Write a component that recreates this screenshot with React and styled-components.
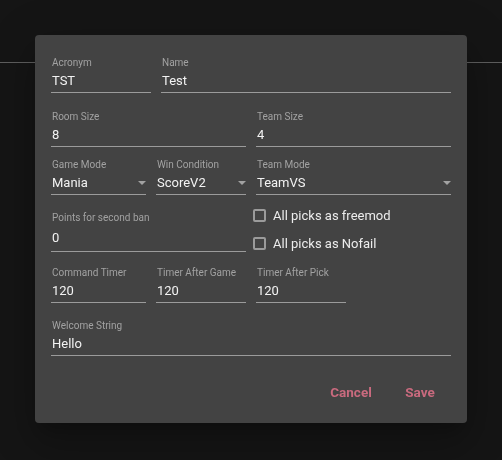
import React from 'react';
import styled, { createGlobalStyle } from 'styled-components';

const GlobalStyle = createGlobalStyle`
  html, body {
    margin: 0;
    padding: 0;
    background: #151515;
    font-family: Roboto, "Liberation Sans", sans-serif;
  }
`;

const Page = styled.div`
  width: 502px;
  height: 460px;
  background: #151515;
  overflow: hidden;
`;

const Divider = styled.div`
  margin-top: 62px;
  height: 1px;
  background: #5e5e5e;
`;

const Overlay = styled.div`
  position: fixed;
  inset: 0;
  display: flex;
  justify-content: center;
  align-items: flex-start;
  padding-top: 35px;
`;

const Dialog = styled.div`
  width: 432px;
  height: 388px;
  box-sizing: border-box;
  background: #434343;
  border-radius: 4px;
  box-shadow: 0 11px 15px -7px rgba(0, 0, 0, 0.2), 0 24px 38px 3px rgba(0, 0, 0, 0.14),
    0 9px 46px 8px rgba(0, 0, 0, 0.12);
  padding: 22px 16px 0;
  display: flex;
  flex-direction: column;
`;

const Row = styled.div`
  display: grid;
  grid-template-columns: ${p => p.cols};
  column-gap: 10px;
  margin-top: ${p => p.top || 0}px;
`;

const Field = styled.div`
  display: flex;
  flex-direction: column;
  border-bottom: 1px solid #9b9b9b;
  padding-bottom: ${p => (p.tall ? 3 : 1)}px;
  margin-top: ${p => p.offset || 0}px;
  align-self: start;
`;

const Label = styled.div`
  font-size: 10px;
  line-height: 12px;
  color: #a2a2a2;
  padding-left: 1px;
  margin-bottom: ${p => (p.tall ? 4 : 2)}px;
  white-space: nowrap;
`;

const Value = styled.div`
  display: flex;
  align-items: center;
  justify-content: space-between;
  font-size: 13px;
  line-height: 20px;
  color: #f2f2f2;
  padding-left: 1px;
`;

const Arrow = styled.span`
  width: 0;
  height: 0;
  border-left: 4px solid transparent;
  border-right: 4px solid transparent;
  border-top: 4px solid #a2a2a2;
`;

const Checks = styled.div`
  display: flex;
  flex-direction: column;
  margin-left: -3px;
`;

const CheckRow = styled.label`
  display: flex;
  align-items: center;
  height: 28px;
  gap: 7px;
  font-size: 13px;
  color: #ececec;
`;

const Box = styled.span`
  width: 13px;
  height: 13px;
  box-sizing: border-box;
  border: 2px solid #9b9b9b;
  border-radius: 2px;
`;

const Actions = styled.div`
  display: flex;
  justify-content: flex-end;
  gap: 5px;
  margin-top: 18px;
  margin-right: -1px;
`;

const Button = styled.button`
  min-width: 64px;
  height: 36px;
  padding: 0 8px;
  border: none;
  background: transparent;
  color: #c96a7e;
  font-family: Roboto, "Liberation Sans", sans-serif;
  font-size: 13.5px;
  font-weight: 700;
  cursor: pointer;
`;

const TextField = ({ label, value, select, tall, offset }) => (
  <Field tall={tall} offset={offset}>
    <Label tall={tall}>{label}</Label>
    <Value>
      <span>{value}</span>
      {select && <Arrow />}
    </Value>
  </Field>
);

const Check = ({ label }) => (
  <CheckRow>
    <Box />
    {label}
  </CheckRow>
);

const App = () => {
  return (
    <>
      <GlobalStyle />
      <Page>
        <Divider />
        <Overlay>
          <Dialog>
            <Row cols="100px 290px">
              <TextField label="Acronym" value="TST" />
              <TextField label="Name" value="Test" />
            </Row>
            <Row cols="195px 195px" top={18}>
              <TextField label="Room Size" value="8" />
              <TextField label="Team Size" value="4" />
            </Row>
            <Row cols="95px 90px 195px" top={12}>
              <TextField label="Game Mode" value="Mania" select />
              <TextField label="Win Condition" value="ScoreV2" select />
              <TextField label="Team Mode" value="TeamVS" select />
            </Row>
            <Row cols="195px 195px" top={6}>
              <TextField label="Points for second ban" value="0" tall offset={11} />
              <Checks>
                <Check label="All picks as freemod" />
                <Check label="All picks as Nofail" />
              </Checks>
            </Row>
            <Row cols="95px 90px 90px" top={10}>
              <TextField label="Command Timer" value="120" />
              <TextField label="Timer After Game" value="120" />
              <TextField label="Timer After Pick" value="120" />
            </Row>
            <Row cols="400px" top={17}>
              <TextField label="Welcome String" value="Hello" />
            </Row>
            <Actions>
              <Button>Cancel</Button>
              <Button>Save</Button>
            </Actions>
          </Dialog>
        </Overlay>
      </Page>
    </>
  );
};

export default App;
